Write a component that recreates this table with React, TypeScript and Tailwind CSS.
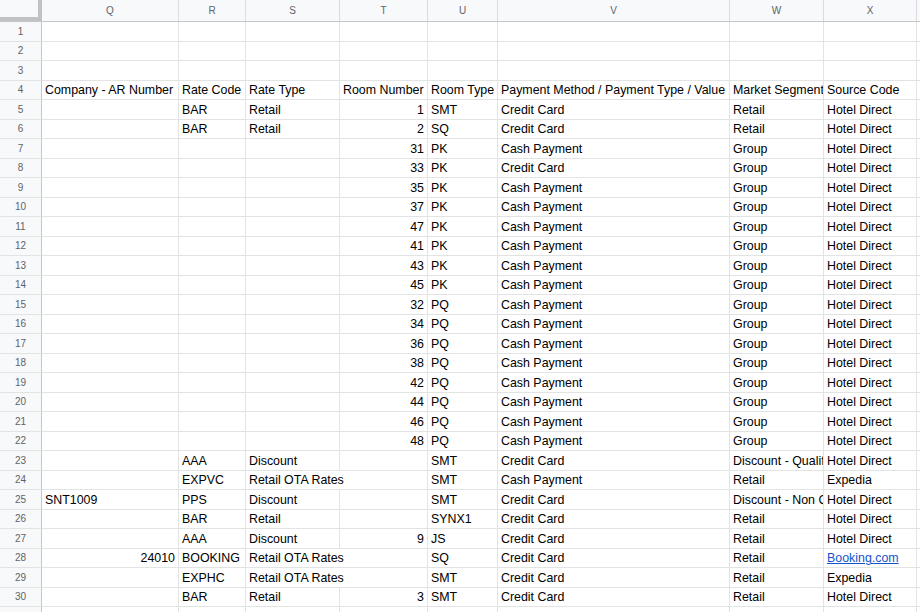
import React from "react";

type Cell = string | { v: string; right?: boolean; span?: number; link?: boolean };

const columns = [
  { key: "Q", width: 137 },
  { key: "R", width: 67 },
  { key: "S", width: 94 },
  { key: "T", width: 88 },
  { key: "U", width: 70 },
  { key: "V", width: 232 },
  { key: "W", width: 94 },
  { key: "X", width: 93 },
];

const n = (v: string): Cell => ({ v, right: true });
const wide = (v: string): Cell => ({ v, span: 2 });

const group = (room: string, type: string, pay: string): Cell[] => [
  "",
  "",
  "",
  n(room),
  type,
  pay,
  "Group",
  "Hotel Direct",
];

const rows: Cell[][] = [
  [],
  [],
  [],
  [
    "Company - AR Number",
    "Rate Code",
    "Rate Type",
    "Room Number",
    "Room Type",
    "Payment Method / Payment Type / Value",
    "Market Segment",
    "Source Code",
  ],
  ["", "BAR", "Retail", n("1"), "SMT", "Credit Card", "Retail", "Hotel Direct"],
  ["", "BAR", "Retail", n("2"), "SQ", "Credit Card", "Retail", "Hotel Direct"],
  group("31", "PK", "Cash Payment"),
  group("33", "PK", "Credit Card"),
  group("35", "PK", "Cash Payment"),
  group("37", "PK", "Cash Payment"),
  group("47", "PK", "Cash Payment"),
  group("41", "PK", "Cash Payment"),
  group("43", "PK", "Cash Payment"),
  group("45", "PK", "Cash Payment"),
  group("32", "PQ", "Cash Payment"),
  group("34", "PQ", "Cash Payment"),
  group("36", "PQ", "Cash Payment"),
  group("38", "PQ", "Cash Payment"),
  group("42", "PQ", "Cash Payment"),
  group("44", "PQ", "Cash Payment"),
  group("46", "PQ", "Cash Payment"),
  group("48", "PQ", "Cash Payment"),
  ["", "AAA", "Discount", "", "SMT", "Credit Card", "Discount - Qualified", "Hotel Direct"],
  ["", "EXPVC", wide("Retail OTA Rates"), "SMT", "Cash Payment", "Retail", "Expedia"],
  ["SNT1009", "PPS", "Discount", "", "SMT", "Credit Card", "Discount - Non Qualified", "Hotel Direct"],
  ["", "BAR", "Retail", "", "SYNX1", "Credit Card", "Retail", "Hotel Direct"],
  ["", "AAA", "Discount", n("9"), "JS", "Credit Card", "Retail", "Hotel Direct"],
  [n("24010"), "BOOKING", wide("Retail OTA Rates"), "SQ", "Credit Card", "Retail", { v: "Booking.com", link: true }],
  ["", "EXPHC", wide("Retail OTA Rates"), "SMT", "Credit Card", "Retail", "Expedia"],
  ["", "BAR", "Retail", n("3"), "SMT", "Credit Card", "Retail", "Hotel Direct"],
  [],
];

function Row({ num, cells }: { num: number; cells: Cell[] }) {
  const out: React.ReactNode[] = [];
  let col = 0;
  let i = 0;
  while (col < columns.length) {
    const raw = cells[i] ?? "";
    const c = typeof raw === "string" ? { v: raw } : raw;
    const span = c.span ?? 1;
    let width = 0;
    for (let k = 0; k < span; k++) width += columns[col + k].width;
    out.push(
      <div
        key={col}
        className={`shrink-0 h-full overflow-hidden whitespace-nowrap border-r border-b border-[#e2e3e3] pl-[3px] pr-[3px] pt-[2px] flex items-center ${
          c.right ? "justify-end" : "justify-start"
        }`}
        style={{ width }}
      >
        {c.link ? (
          <span className="text-[#1155cc] underline">{c.v}</span>
        ) : (
          c.v
        )}
      </div>
    );
    col += span;
    i++;
  }
  return (
    <div className="flex h-[19.5px]">
      <div className="w-[42px] shrink-0 h-full bg-[#f8f9fa] border-r border-r-[#c4c7c5] border-b border-b-[#e2e3e3] flex items-center justify-center text-[10px] text-[#5f6368]">
        {num}
      </div>
      {out}
      <div className="flex-1 h-full border-b border-[#e2e3e3]" />
    </div>
  );
}

export default function App() {
  return (
    <div
      className="w-[920px] h-[612px] overflow-hidden bg-white text-[12.4px] text-black"
      style={{ fontFamily: '"Liberation Sans", Arial, sans-serif' }}
    >
      <div className="flex h-[22px] bg-[#f8f9fa] border-b border-[#c4c7c5]">
        <div className="w-[42px] shrink-0 h-full border-r-[4px] border-b-[4px] border-[#c0c2c4] bg-[#f8f9fa]" />
        {columns.map((c) => (
          <div
            key={c.key}
            className="shrink-0 h-full border-r border-[#dadce0] flex items-center justify-center text-[10px] text-[#5f6368]"
            style={{ width: c.width }}
          >
            {c.key}
          </div>
        ))}
        <div className="flex-1" />
      </div>
      {rows.map((r, idx) => (
        <Row key={idx} num={idx + 1} cells={r} />
      ))}
    </div>
  );
}
